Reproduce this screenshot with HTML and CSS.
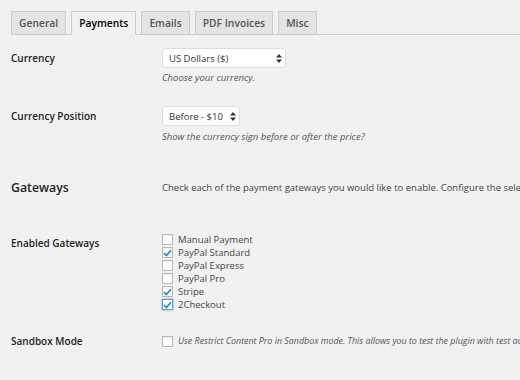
FILE: index.html
```html
<!DOCTYPE html>
<html lang="en">
<head>
    <meta charset="UTF-8">
    <title>Payments Settings</title>
    <link rel="stylesheet" href="styles.css">
</head>
<body>
    <h2 class="nav-tab-wrapper">
        <a class="nav-tab">General</a>
        <a class="nav-tab nav-tab-active">Payments</a>
        <a class="nav-tab">Emails</a>
        <a class="nav-tab">PDF Invoices</a>
        <a class="nav-tab">Misc</a>
    </h2>

    <div class="settings">
        <!-- Currency -->
        <div class="row row-currency">
            <div class="label">Currency</div>
            <div class="field">
                <span class="select select-wide">
                    <span class="select-text">US Dollars ($)</span>
                    <svg class="arrows" width="6" height="9" viewBox="0 0 6 9"><path d="M0 3.5 L3 0 L6 3.5 Z M0 5.5 L3 9 L6 5.5 Z" fill="#333"/></svg>
                </span>
                <p class="description">Choose your currency.</p>
            </div>
        </div>

        <!-- Currency position -->
        <div class="row row-position">
            <div class="label">Currency Position</div>
            <div class="field">
                <span class="select select-narrow">
                    <span class="select-text">Before - $10</span>
                    <svg class="arrows" width="6" height="9" viewBox="0 0 6 9"><path d="M0 3.5 L3 0 L6 3.5 Z M0 5.5 L3 9 L6 5.5 Z" fill="#333"/></svg>
                </span>
                <p class="description">Show the currency sign before or after the price?</p>
            </div>
        </div>

        <!-- Gateways heading -->
        <div class="row row-heading">
            <h3 class="section-title">Gateways</h3>
            <div class="field intro">Check each of the payment gateways you would like to enable. Configure the selected gateways below.</div>
        </div>

        <!-- Gateway list -->
        <div class="row row-gateways">
            <div class="label">Enabled Gateways</div>
            <ul class="gateway-list">
                <li><span class="checkbox"></span>Manual Payment</li>
                <li><span class="checkbox"><svg width="9" height="8" viewBox="0 0 9 8"><path d="M1 4.2 L3.4 6.6 L8 1.2" stroke="#1e8cbe" stroke-width="1.7" fill="none"/></svg></span>PayPal Standard</li>
                <li><span class="checkbox"></span>PayPal Express</li>
                <li><span class="checkbox"></span>PayPal Pro</li>
                <li><span class="checkbox"><svg width="9" height="8" viewBox="0 0 9 8"><path d="M1 4.2 L3.4 6.6 L8 1.2" stroke="#1e8cbe" stroke-width="1.7" fill="none"/></svg></span>Stripe</li>
                <li><span class="checkbox focused"><svg width="9" height="8" viewBox="0 0 9 8"><path d="M1 4.2 L3.4 6.6 L8 1.2" stroke="#1e8cbe" stroke-width="1.7" fill="none"/></svg></span>2Checkout</li>
            </ul>
        </div>

        <!-- Sandbox -->
        <div class="row row-sandbox">
            <div class="label">Sandbox Mode</div>
            <div class="field sandbox">
                <span class="checkbox"></span>
                <span class="description sandbox-text">Use Restrict Content Pro in Sandbox mode. This allows you to test the plugin with test accounts from your payment processor.</span>
            </div>
        </div>
    </div>
</body>
</html>
```

FILE: styles.css
```css
body {
    margin: 0;
    padding: 0 0 0 11px;
    background-color: #f1f1f1;
    color: #444;
    font-family: "Open Sans", "Noto Sans", sans-serif;
    font-size: 9.5px;
    overflow: hidden;
}
.nav-tab-wrapper {
    display: flex;
    margin: 0;
    padding: 11px 0 0 0;
    border-bottom: 1px solid #ccc;
    white-space: nowrap;
}
.nav-tab {
    display: block;
    margin-left: 5px;
    margin-bottom: -1px;
    padding: 3px 7px;
    font-size: 10.3px;
    font-weight: 600;
    line-height: 16px;
    color: #555;
    background: #e4e4e4;
    border: 1px solid #ccc;
}
.nav-tab:first-child {
    margin-left: 0;
}
.nav-tab-active {
    color: #000;
    background: #f1f1f1;
    border-bottom-color: #f1f1f1;
}
.row {
    display: grid;
    grid-template-columns: 151px 1fr;
    white-space: nowrap;
}
.label {
    font-size: 10px;
    font-weight: 600;
    color: #222;
    line-height: 20px;
}
.row-currency {
    margin-top: 13px;
}
.row-position {
    margin-top: 20px;
}
.row-heading {
    margin-top: 33px;
    align-items: center;
}
.row-gateways {
    margin-top: 35px;
}
.row-sandbox {
    margin-top: 22px;
}
.select {
    position: relative;
    display: flex;
    align-items: center;
    height: 20px;
    box-sizing: border-box;
    padding: 0 6px;
    background: #fff;
    border: 1px solid #ddd;
    border-radius: 3px;
    color: #333;
    font-size: 9.5px;
}
.select-wide {
    width: 124px;
}
.select-narrow {
    width: 78px;
}
.arrows {
    position: absolute;
    right: 3px;
    top: 5px;
}
.description {
    margin: 0;
    font-style: italic;
    color: #555;
    line-height: 16px;
}
.row-currency .description {
    margin-top: 2px;
}
.row-position .description {
    margin-top: 3px;
}
.section-title {
    margin: 0;
    font-size: 12.3px;
    font-weight: 600;
    color: #222;
    line-height: 20px;
}
.intro {
    color: #444;
    line-height: 20px;
}
.gateway-list {
    list-style: none;
    margin: 0;
    padding: 0;
}
.gateway-list li {
    display: flex;
    align-items: center;
    height: 13px;
    color: #444;
}
.row-gateways .label {
    line-height: 16px;
    margin-top: 2px;
}
.checkbox {
    display: flex;
    align-items: center;
    justify-content: center;
    flex-shrink: 0;
    width: 11px;
    height: 11px;
    box-sizing: border-box;
    margin-right: 5px;
    background: #fff;
    border: 1px solid #b4b9be;
    box-shadow: inset 0 1px 2px rgba(0, 0, 0, 0.07);
}
.checkbox.focused {
    border-color: #5b9dd9;
    box-shadow: 0 0 2px rgba(30, 140, 190, 0.8);
}
.row-sandbox .label {
    line-height: 16px;
}
.sandbox {
    display: flex;
    align-items: center;
}
.sandbox-text {
    font-size: 8.9px;
}
```
